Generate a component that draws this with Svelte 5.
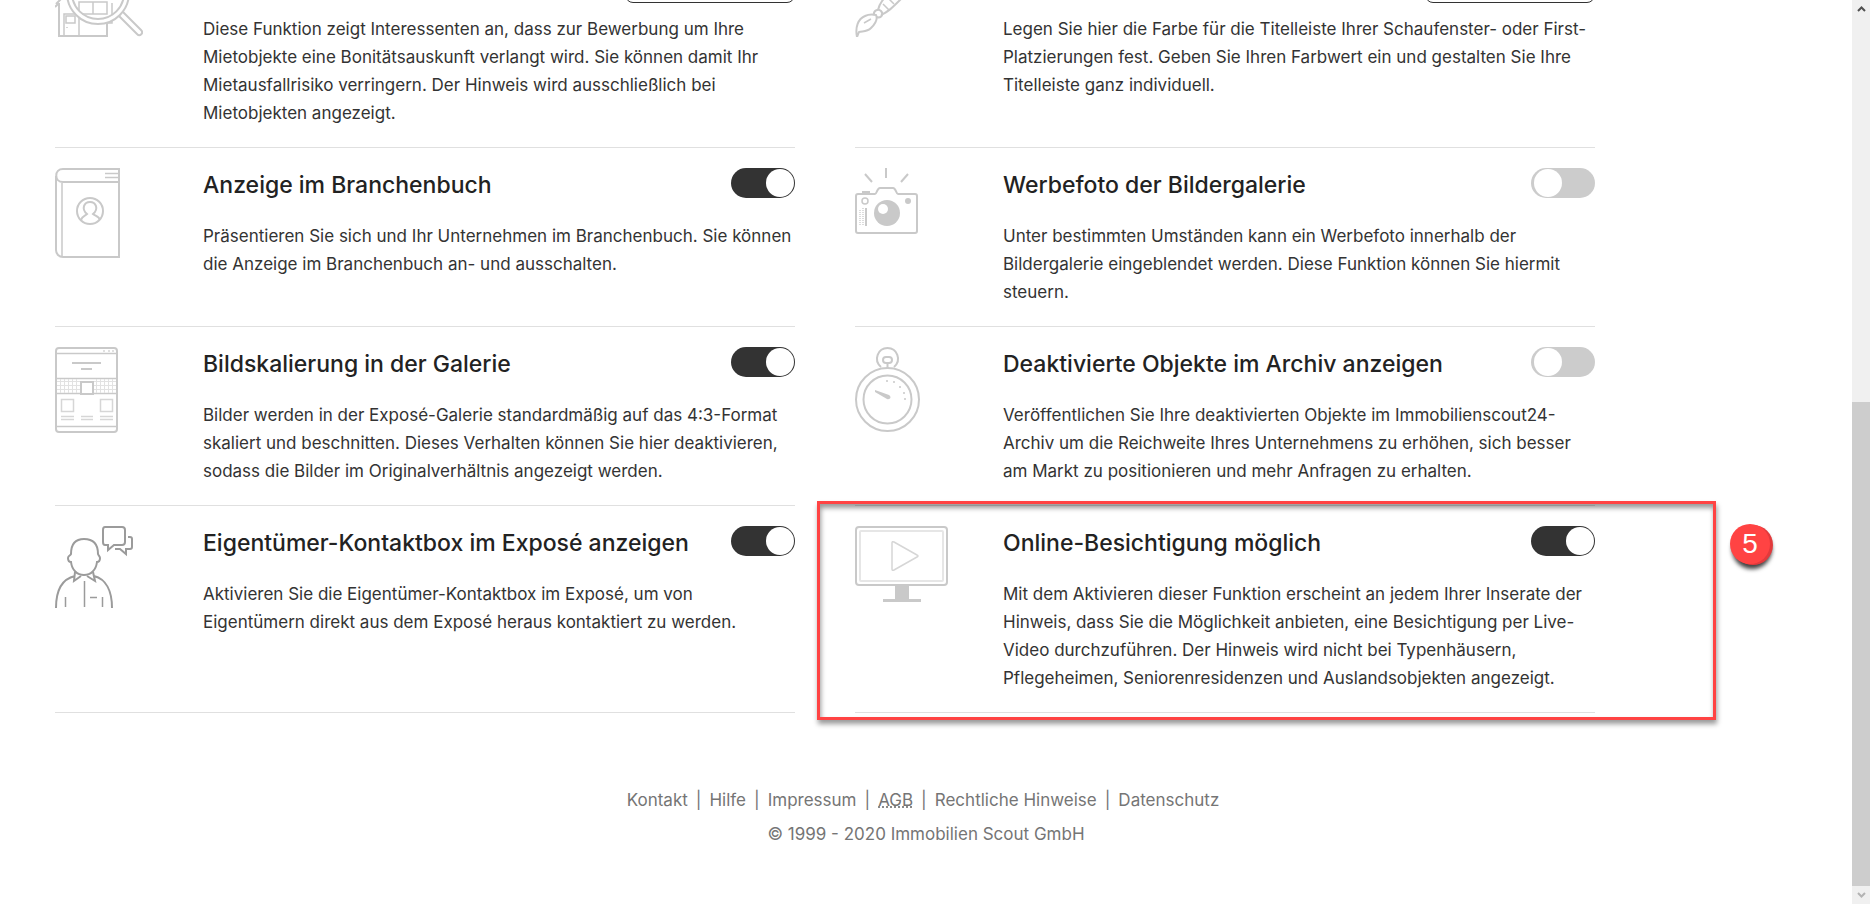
<script>
  let features = $state([
    {
      id: 'bonitaet',
      icon: 'house',
      button: true,
      text: 'Diese Funktion zeigt Interessenten an, dass zur Bewerbung um Ihre Mietobjekte eine Bonitätsauskunft verlangt wird. Sie können damit Ihr Mietausfallrisiko verringern. Der Hinweis wird ausschließlich bei Mietobjekten angezeigt.',
    },
    {
      id: 'titelleiste',
      icon: 'brush',
      button: true,
      text: 'Legen Sie hier die Farbe für die Titelleiste Ihrer Schaufenster- oder First-Platzierungen fest. Geben Sie Ihren Farbwert ein und gestalten Sie Ihre Titelleiste ganz individuell.',
    },
    {
      id: 'branchenbuch',
      icon: 'book',
      title: 'Anzeige im Branchenbuch',
      on: true,
      text: 'Präsentieren Sie sich und Ihr Unternehmen im Branchenbuch. Sie können die Anzeige im Branchenbuch an- und ausschalten.',
    },
    {
      id: 'werbefoto',
      icon: 'camera',
      title: 'Werbefoto der Bildergalerie',
      on: false,
      text: 'Unter bestimmten Umständen kann ein Werbefoto innerhalb der Bildergalerie eingeblendet werden. Diese Funktion können Sie hiermit steuern.',
    },
    {
      id: 'bildskalierung',
      icon: 'page',
      title: 'Bildskalierung in der Galerie',
      on: true,
      text: 'Bilder werden in der Exposé-Galerie standardmäßig auf das 4:3-Format skaliert und beschnitten. Dieses Verhalten können Sie hier deaktivieren, sodass die Bilder im Originalverhältnis angezeigt werden.',
    },
    {
      id: 'archiv',
      icon: 'stopwatch',
      title: 'Deaktivierte Objekte im Archiv anzeigen',
      on: false,
      text: 'Veröffentlichen Sie Ihre deaktivierten Objekte im Immobilienscout24-Archiv um die Reichweite Ihres Unternehmens zu erhöhen, sich besser am Markt zu positionieren und mehr Anfragen zu erhalten.',
    },
    {
      id: 'kontaktbox',
      icon: 'person',
      title: 'Eigentümer-Kontaktbox im Exposé anzeigen',
      on: true,
      text: 'Aktivieren Sie die Eigentümer-Kontaktbox im Exposé, um von Eigentümern direkt aus dem Exposé heraus kontaktiert zu werden.',
    },
    {
      id: 'besichtigung',
      icon: 'monitor',
      title: 'Online-Besichtigung möglich',
      on: true,
      step: 5,
      text: 'Mit dem Aktivieren dieser Funktion erscheint an jedem Ihrer Inserate der Hinweis, dass Sie die Möglichkeit anbieten, eine Besichtigung per Live-Video durchzuführen. Der Hinweis wird nicht bei Typenhäusern, Pflegeheimen, Seniorenresidenzen und Auslandsobjekten angezeigt.',
    },
  ]);

  const LINKS = ['Kontakt', 'Hilfe', 'Impressum', 'AGB', 'Rechtliche Hinweise', 'Datenschutz'];
</script>

{#snippet icon(name)}
  {#if name === 'house'}
    <svg class="icon" width="88" height="76" viewBox="0 0 88 76" aria-hidden="true">
      <path d="M4 42v33h48V62M1 43l9-9M0 46l4-4" />
      <path class="light" d="M9 75V53h15v22M11 55h9v7h-9zM24 41h28v12H24zM38 41v12M57 42v20h-5M12 66v1" />
      <circle class="lens" cx="43" cy="32" r="29" />
      <circle cx="43" cy="32" r="31" />
      <circle cx="43" cy="32" r="26" />
      <path d="M64 55l18 18c3 3 7-1 4-4L68 51" />
    </svg>
  {:else if name === 'brush'}
    <svg class="icon" width="76" height="76" viewBox="0 0 76 76" aria-hidden="true">
      <path d="M2 76C0 66 3 58 10 55c4-2 7-2 11-1 2 4-1 9-5 13-4 4-8 3-12 4z" />
      <path d="M19 54c-1-4 4-7 7-4s0 8-4 6" />
      <path d="M23 49c2-8 6-12 13-18L68 1M26 54c7-3 11-7 21-17L75 9" />
      <path class="light" d="M28 43l6 6M33 37l6 6M9 62l7-4" />
    </svg>
  {:else if name === 'book'}
    <svg class="icon" width="65" height="90" viewBox="0 0 65 90" aria-hidden="true">
      <path d="M64 14V1H8C-1 1-1 14 8 14h56v75H8c-4 0-7-3-7-7V8" />
      <path class="light" d="M7 15v73M50 5.500h14M50 9.500h14" />
      <circle class="mid" cx="35" cy="43" r="13" />
      <path class="mid" d="M26 52c1-4 4-4 6-6-6-5-3-12 3-12s9 7 3 12c2 2 6 2 7 6" />
    </svg>
  {:else if name === 'camera'}
    <svg class="icon" width="63" height="66" viewBox="0 0 63 66" aria-hidden="true">
      <path d="M3 26h17c2 0 2-6 5-6h13c3 0 3 6 5 6h17q2 0 2 2v35q0 2-2 2H3q-2 0-2-2V28q0-2 2-2z" />
      <path class="mid" d="M31 0v10M10 6l7 8M53 6l-7 8M7 24h8M11 40v18" />
      <path class="dots" d="M5 42v15M8 40v18" />
      <circle class="light" cx="10" cy="33" r="3" />
      <circle class="fill" cx="53" cy="33" r="3" />
      <circle class="fill" cx="32" cy="45" r="13" />
      <circle class="hole" cx="28" cy="41" r="5" />
    </svg>
  {:else if name === 'page'}
    <svg class="icon" width="63" height="86" viewBox="0 0 63 86" aria-hidden="true">
      <rect x="1" y="1" width="61" height="84" rx="3" />
      <path class="light" d="M2 6.500h59M2 31.500h59M2 46.500h59M2 79.500h59" />
      <path class="grid" d="M2 34.500h59M2 38.500h59M2 42.500h59M5.500 32v14M9.500 32v14M13.500 32v14M17.500 32v14M21.500 32v14M41.500 32v14M45.500 32v14M49.500 32v14M53.500 32v14M57.500 32v14" />
      <path class="mid" d="M17 16h29M26 22h11" />
      <path class="faint" d="M48 4h2M53 4h2M57 4h2M6.500 52.500h12v12h-12zM45.500 52.500h12v12h-12zM6 69.500h13M26 69.500h12M45 69.500h13M6 72.500h13M26 72.500h12M45 72.500h13" />
      <rect class="box" x="26" y="35" width="12" height="12" />
    </svg>
  {:else if name === 'stopwatch'}
    <svg class="icon" width="65" height="85" viewBox="0 0 65 85" aria-hidden="true">
      <circle cx="32.500" cy="52.500" r="31.500" />
      <circle cx="32.500" cy="52.500" r="24" />
      <path d="M26 20C18 13 23 1 32.500 1S47 13 39 20" />
      <rect class="mid" x="28" y="10" width="9" height="6" rx="3" />
      <path class="mid" d="M32.500 16v5" />
      <path class="fill" d="M20 43l14 5c3 2 1 5-2 4l-12-7z" />
      <g class="fill">
        <circle cx="32" cy="34" r="1" /><circle cx="39" cy="35" r="1" /><circle cx="45" cy="40" r="1" />
        <circle cx="49" cy="46" r="1" /><circle cx="50" cy="52" r="1" />
      </g>
    </svg>
  {:else if name === 'person'}
    <svg class="icon dark" width="78" height="82" viewBox="0 0 78 82" aria-hidden="true">
      <path d="M16 28c0-10 4-15 13-15s14 5 14 15c0 1 2 2 2 4s-1 4-3 4c-1 8-6 13-13 13s-12-5-13-13c-2 0-3-2-3-4s3-3 3-4z" />
      <path d="M1 82c0-17 6-29 19-32M57 82c0-17-6-29-18-32M20 46l-1 9 7-5M38 46l2 9-8-5" />
      <path class="light" d="M29.500 55v26M10.500 71v10M47.500 71v10M35 71.500h7" />
      <path d="M50 1h17q3 0 3 3v12q0 3-3 3h-8l-6 5v-5h-3q-2 0-2-3V4q0-3 2-3zM73 11h2q2 0 2 2v8q0 2-2 2h-4v5l-6-5h-5" />
    </svg>
  {:else if name === 'monitor'}
    <svg class="icon" width="93" height="76" viewBox="0 0 93 76" aria-hidden="true">
      <rect x="1" y="1" width="91" height="58" rx="3" />
      <rect class="pale" x="5" y="5" width="83" height="50" rx="1" />
      <path class="faint" d="M37 17q0-2 2-1l23 13q2 1 0 2L39 44q-2 1-2-1z" />
      <path class="fill" d="M40 60h14v13h12v3H28v-3h12z" />
    </svg>
  {/if}
{/snippet}

<div class="window">
  <div class="page">
    <main class="features">
      {#each features as feature}
        <section class="feature">
          <div class="picture">{@render icon(feature.icon)}</div>
          <div class="content">
            <div class="head">
              {#if feature.title}
                <h2><label for={feature.id}>{feature.title}</label></h2>
              {/if}
              {#if feature.button}
                <button class="edit" type="button" aria-label="Bearbeiten"></button>
              {:else}
                <input class="toggle" type="checkbox" role="switch" id={feature.id} bind:checked={feature.on} />
              {/if}
            </div>
            <p>{feature.text}</p>
          </div>
          {#if feature.step}
            <div class="marker"><span class="badge">{feature.step}</span></div>
          {/if}
        </section>
      {/each}
    </main>

    <footer>
      <ul>
        {#each LINKS as link}
          <li>
            <a href="#top">{#if link === 'AGB'}<abbr title="Allgemeine Geschäftsbedingungen">{link}</abbr>{:else}{link}{/if}</a>
          </li>
        {/each}
      </ul>
      <p>© 1999 - 2020 Immobilien Scout GmbH</p>
    </footer>
  </div>

  <div class="scrollbar" aria-hidden="true">
    <svg viewBox="0 0 18 18"><path d="M6 11l3.500-3.500L13 11" stroke="#505050" /></svg>
    <div class="track"></div>
    <div class="thumb"></div>
    <svg viewBox="0 0 18 18"><path d="M6 7l3.500 3.500L13 7" stroke="#b4b4b4" /></svg>
  </div>
</div>

<style>
  :global(body) {
    background: #fff;
  }

  .window {
    display: flex;
    height: 100vh;
    overflow: hidden;
    font-family: Inter, 'Open Sans', sans-serif;
    font-size: 17px;
    line-height: 28px;
    color: #333;
  }

  .page {
    flex: 1;
    min-width: 0;
    overflow: hidden;
  }

  /* the list is scrolled: its first row starts above the window */
  .features {
    display: grid;
    grid-template-columns: 1fr 1fr;
    column-gap: 60px;
    max-width: 1540px;
    margin: -59px 60px 0 55px;
  }

  .feature {
    position: relative;
    display: flex;
    padding: 20px 0;
    border-bottom: 1px solid #e0e0e0;
  }

  .picture {
    flex: none;
    width: 148px;
  }

  .content {
    flex: 1;
    min-width: 0;
  }

  .head {
    display: flex;
    justify-content: space-between;
    align-items: flex-start;
    height: 34px;
    margin-bottom: 20px;
  }

  h2 {
    margin: 0;
    font-size: 23px;
    font-weight: 500;
    line-height: 34px;
    color: #222;
  }

  p {
    margin: 0;
  }

  .edit {
    width: 170px;
    height: 42px;
    margin-left: auto;
    border: 1px solid #333;
    border-radius: 8px;
    background: #fff;
  }

  .toggle {
    appearance: none;
    flex: none;
    display: flex;
    align-items: center;
    width: 64px;
    height: 30px;
    margin: 0;
    padding: 0 1px 0 3px;
    border-radius: 15px;
    background: #ccc;
    cursor: pointer;
  }

  .toggle::before {
    content: '';
    width: 28px;
    height: 28px;
    border-radius: 50%;
    background: #fff;
  }

  .toggle:checked {
    justify-content: flex-end;
    background: #333;
  }

  /* icons */
  .icon {
    display: block;
    fill: none;
    stroke: #c9c9c9;
    stroke-width: 2;
  }

  .icon.dark {
    stroke: #9b9b9b;
  }

  .light {
    stroke-width: 1.5;
  }

  .faint {
    stroke: #d6d6d6;
    stroke-width: 1.5;
  }

  .pale {
    stroke: #e6e6e6;
  }

  .grid {
    stroke: #e2e2e2;
    stroke-width: 1;
  }

  .dots {
    stroke-dasharray: 1 1;
    stroke: #dcdcdc;
  }

  .lens {
    fill: none;
    stroke: #fff;
    stroke-width: 5;
  }

  .fill {
    fill: #c9c9c9;
    stroke: none;
  }

  .hole {
    fill: #fff;
    stroke: none;
  }

  .box {
    fill: #fff;
  }

  /* step marker around a feature */
  .marker {
    position: absolute;
    inset: -5px -121px -8px -38px;
    border: 3px solid #ff4343;
    box-shadow: 1px 4px 5px rgba(0, 0, 0, 0.4), inset 1px 4px 5px rgba(0, 0, 0, 0.4);
    pointer-events: none;
  }

  .badge {
    position: absolute;
    top: 20px;
    right: -57px;
    width: 40px;
    height: 40px;
    border-radius: 50%;
    background: #ff4343;
    box-shadow: 3px 1px 0 #e23a3c, 2px 5px 4px rgba(0, 0, 0, 0.75);
    font-family: 'Liberation Sans', sans-serif;
    font-size: 28px;
    line-height: 40px;
    text-align: center;
    color: #fff;
  }

  footer {
    padding-top: 70px;
    text-align: center;
    line-height: 34px;
    color: #757575;
  }

  footer ul {
    display: flex;
    justify-content: center;
    margin: 0;
    padding: 0 6px 0 0;
    list-style: none;
  }

  footer li + li::before {
    content: '|';
    margin: 0 8px;
  }

  footer a {
    color: inherit;
    text-decoration: none;
  }

  footer abbr {
    text-decoration: underline dotted;
  }

  .scrollbar {
    display: grid;
    grid-template-rows: 18px 384fr 483fr 18px;
    width: 18px;
    background: #f0f0f0;
  }

  .scrollbar svg {
    width: 18px;
    height: 18px;
    fill: none;
    stroke-width: 2;
  }

  .thumb {
    background: #cdcdcd;
  }
</style>
